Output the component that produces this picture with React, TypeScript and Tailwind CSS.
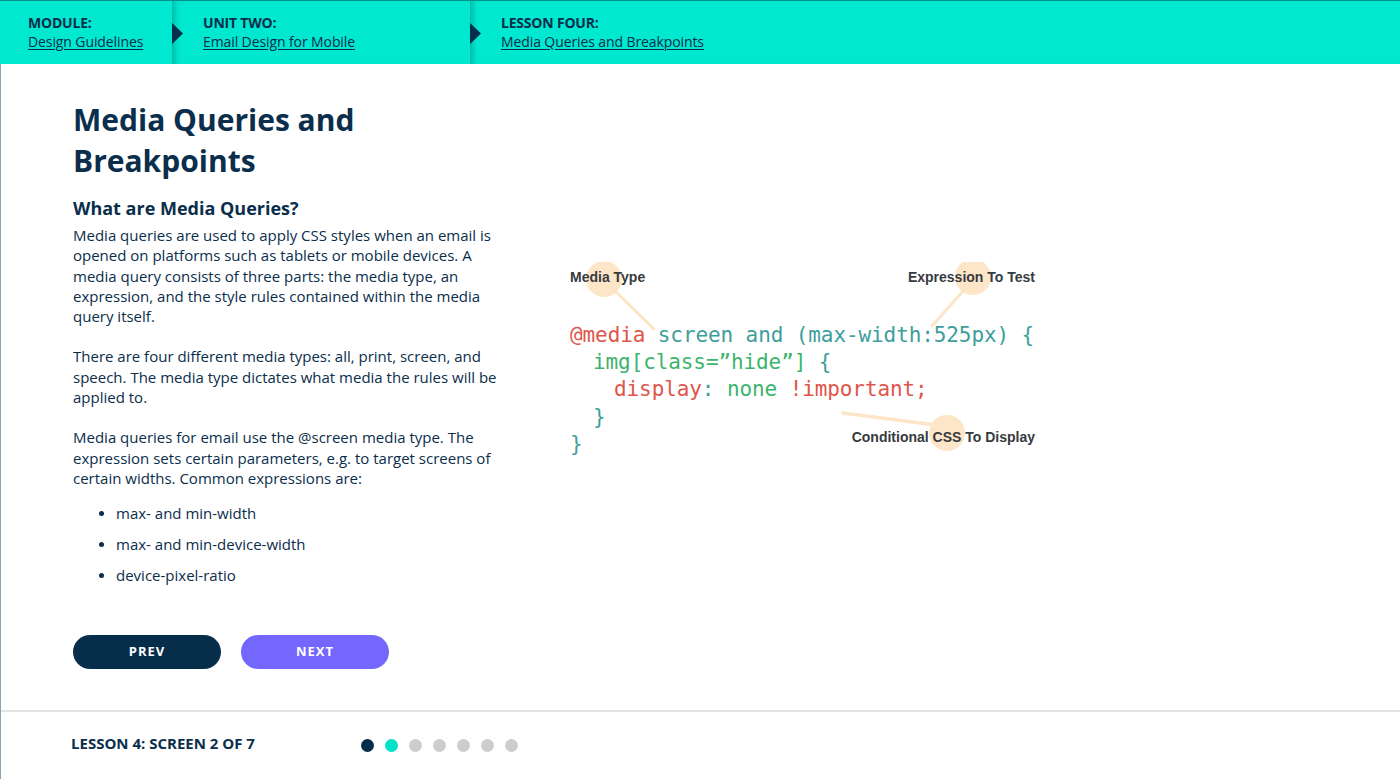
import type { ReactNode } from "react";

const navy = "text-[#0a2e4b]";

const Crumb = ({ label, link, width, first }: { label: string; link: string; width?: string; first?: boolean }) => (
  <div
    className={`relative flex h-full flex-col justify-center pb-[1px] ${width ?? "flex-1"} ${
      first ? "pl-[28px]" : "pl-[31px] shadow-[inset_7px_0_6px_-5px_rgba(0,60,60,0.35)]"
    }`}
  >
    {!first && (
      <svg className="absolute left-0 top-[22px]" width="11" height="21" viewBox="0 0 11 21">
        <path d="M0 0 L11 10.5 L0 21 Z" fill="#072e4a" />
      </svg>
    )}
    <div className="text-[14px] font-bold leading-[18px] tracking-[-0.2px]">{label}</div>
    <a href="#" className="text-[14px] leading-[19px] tracking-[-0.1px] underline underline-offset-2">
      {link}
    </a>
  </div>
);

const Para = ({ children, className = "" }: { children: ReactNode; className?: string }) => (
  <p className={`text-[15px] leading-[20.3px] ${className}`}>{children}</p>
);

const Diagram = () => (
  <div className="relative h-[200px] w-[465px]">
    <svg className="absolute inset-0" width="465" height="200" viewBox="0 0 465 200">
      <g fill="#fde6c8" stroke="#fde6c8" strokeLinecap="round">
        <circle cx="34" cy="17" r="18" stroke="none" />
        <line x1="44" y1="28" x2="84" y2="67" strokeWidth="3" />
        <circle cx="403" cy="15" r="18" stroke="none" />
        <line x1="394" y1="28" x2="362" y2="64" strokeWidth="3" />
        <circle cx="377" cy="171" r="18" stroke="none" />
        <line x1="273" y1="151" x2="366" y2="163" strokeWidth="3.5" />
      </g>
    </svg>
    <div
      className="relative flex h-[30px] items-center justify-between text-[14px] font-bold text-[#363b40]"
      style={{ fontFamily: "'Liberation Sans', Arial, sans-serif" }}
    >
      <span>Media Type</span>
      <span>Expression To Test</span>
    </div>
    <div
      className="relative mt-[30px] text-[21px] leading-[27.2px] tracking-[-0.1px] whitespace-pre"
      style={{ fontFamily: "'DejaVu Sans Mono', 'Liberation Mono', monospace" }}
    >
      <div>
        <span className="text-[#e0554b]">@media</span>
        <span className="text-[#3d9e9b]"> screen and (max-width:525px) {"{"}</span>
      </div>
      <div className="pl-[23px]">
        <span className="text-[#3db46d]">img[class=”hide”] </span>
        <span className="text-[#3d9e9b]">{"{"}</span>
      </div>
      <div className="pl-[44px]">
        <span className="text-[#e0554b]">display</span>
        <span className="text-[#3d9e9b]">: </span>
        <span className="text-[#3db46d]">none </span>
        <span className="text-[#e0554b]">!important;</span>
      </div>
      <div className="pl-[23px] text-[#3d9e9b]">{"}"}</div>
      <div className="text-[#3d9e9b]">{"}"}</div>
    </div>
    <span
      className="absolute right-0 top-[165px] text-[14px] font-bold text-[#363b40]"
      style={{ fontFamily: "'Liberation Sans', Arial, sans-serif" }}
    >
      Conditional CSS To Display
    </span>
  </div>
);

export default function App() {
  return (
    <div
      className={`flex h-[779px] w-[1400px] flex-col overflow-hidden bg-white ${navy}`}
      style={{ fontFamily: "'Open Sans', 'Noto Sans', sans-serif" }}
    >
      {/* Breadcrumb header */}
      <header className="flex h-16 shrink-0 border-t border-[#0c8f8a] bg-[#00e8cf]">
        <Crumb first width="w-[172px]" label="MODULE:" link="Design Guidelines" />
        <Crumb width="w-[298px]" label="UNIT TWO:" link="Email Design for Mobile" />
        <Crumb label="LESSON FOUR:" link="Media Queries and Breakpoints" />
      </header>

      <div className="flex flex-1 flex-col border-l border-[#8ba4b2]">
        {/* Lesson body */}
        <main className="flex flex-1 pl-[72px]">
          <div className="w-[440px] pt-[35px]">
            <h1 className="text-[30px] font-bold leading-[41px]">
              Media Queries and
              <br />
              Breakpoints
            </h1>
            <h2 className="mt-[15px] text-[18px] font-bold leading-[24px]">What are Media Queries?</h2>
            <Para className="mt-[5px]">
              Media queries are used to apply CSS styles when an email is opened on platforms such as tablets or mobile
              devices. A media query consists of three parts: the media type, an expression, and the style rules
              contained within the media query itself.
            </Para>
            <Para className="mt-[20px]">
              There are four different media types: all, print, screen, and speech. The media type dictates what media
              the rules will be applied to.
            </Para>
            <Para className="mt-[20px]">
              Media queries for email use the @screen media type. The expression sets certain parameters, e.g. to
              target screens of certain widths. Common expressions are:
            </Para>
            <ul className="mt-[15px] flex flex-col gap-[11px] text-[15px] leading-[20px]">
              {["max- and min-width", "max- and min-device-width", "device-pixel-ratio"].map((item) => (
                <li key={item} className="flex items-center">
                  <span className="ml-[26px] mr-[12px] h-[5px] w-[5px] rounded-full bg-[#0a2e4b]" />
                  {item}
                </li>
              ))}
            </ul>
            <div className="mt-[50px] flex gap-[20px]">
              <button
                type="button"
                className="h-[34px] w-[148px] rounded-full bg-[#062e4b] pb-[1px] text-[13px] font-bold tracking-[1px] text-white"
              >
                PREV
              </button>
              <button
                type="button"
                className="h-[34px] w-[148px] rounded-full bg-[#7367fd] pb-[1px] text-[13px] font-bold tracking-[1px] text-white"
              >
                NEXT
              </button>
            </div>
          </div>
          <div className="ml-[57px] pt-[198px]">
            <Diagram />
          </div>
        </main>

        {/* Progress footer */}
        <footer className="flex h-[69px] shrink-0 items-center border-t-2 border-[#e4e4e4] pb-[5px] pl-[70px]">
          <span className="w-[290px] text-[15px] font-bold">LESSON 4: SCREEN 2 OF 7</span>
          <div className="mt-[4px] flex gap-[11px]">
            {[0, 1, 2, 3, 4, 5, 6].map((i) => (
              <span
                key={i}
                className={`h-[13px] w-[13px] rounded-full ${
                  i === 0 ? "bg-[#062e4b]" : i === 1 ? "bg-[#00e2c9]" : "bg-[#cdcdcd]"
                }`}
              />
            ))}
          </div>
        </footer>
      </div>
    </div>
  );
}
